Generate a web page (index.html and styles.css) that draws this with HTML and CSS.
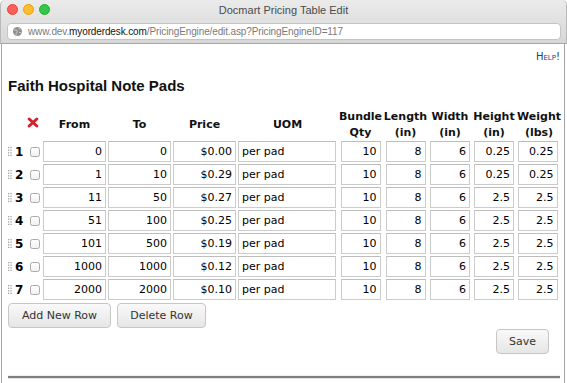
FILE: index.html
```html
<!DOCTYPE html>
<html>
<head>
<meta charset="utf-8">
<title>Docmart Pricing Table Edit</title>
<link rel="stylesheet" href="styles.css">
</head>
<body>
<div class="window">
  <div class="chrome">
    <div class="titlebar">
      <div class="lights">
        <span class="light red"></span><span class="light yellow"></span><span class="light green"></span>
      </div>
      <div class="wintitle">Docmart Pricing Table Edit</div>
      <div></div>
    </div>
    <div class="addr">
      <svg class="globe" width="9" height="9" viewBox="0 0 9 9">
        <circle cx="4.5" cy="4.5" r="4.5" fill="#8f8f8f"/>
        <path d="M1.2 3.2 Q3 2.2 4 3.6 Q5 5 3.6 5.8 Q2.6 6.6 3.2 8.4 M5.6 0.7 Q6.2 2 7.4 2.2 M6 5.6 Q7 5 8.2 6" stroke="#d8d8d8" stroke-width="0.9" fill="none"/>
      </svg>
      <span class="url"><span class="dim">www.dev.</span>myorderdesk.com<span class="dim">/PricingEngine/edit.asp?PricingEngineID=117</span></span>
    </div>
  </div>

  <div class="page">
    <div class="helprow"><a class="help" href="#">Help!</a></div>
    <h1 class="title">Faith Hospital Note Pads</h1>

    <div class="grid head">
      <div class="hc"></div>
      <div class="hc xcell">
        <svg width="12" height="11" viewBox="0 0 12 11"><path d="M2.2 2 L9.8 9 M9.8 2 L2.2 9" stroke="#d61f2c" stroke-width="3" stroke-linecap="round"/></svg>
      </div>
      <div class="hc">From</div>
      <div class="hc">To</div>
      <div class="hc">Price</div>
      <div class="hc">UOM</div>
      <div class="hc"><span>Bundle</span><span>Qty</span></div>
      <div class="hc"><span>Length</span><span>(in)</span></div>
      <div class="hc"><span>Width</span><span>(in)</span></div>
      <div class="hc"><span>Height</span><span>(in)</span></div>
      <div class="hc wt"><span>Weight</span><span>(lbs)</span></div>
    </div>

    <div class="grid rows">
      <div class="lbl"><svg class="handle" width="4" height="9" viewBox="0 0 4 9"><g fill="#a3a3a3"><rect x="0" y="0" width="1.3" height="1.3"/><rect x="2.4" y="0" width="1.3" height="1.3"/><rect x="0" y="2.6" width="1.3" height="1.3"/><rect x="2.4" y="2.6" width="1.3" height="1.3"/><rect x="0" y="5.2" width="1.3" height="1.3"/><rect x="2.4" y="5.2" width="1.3" height="1.3"/><rect x="0" y="7.7" width="1.3" height="1.3"/><rect x="2.4" y="7.7" width="1.3" height="1.3"/></g></svg><b>1</b></div>
      <div class="cbc"><input type="checkbox" class="cb"></div>
      <div class="c"><input class="in w63" value="0"></div>
      <div class="c"><input class="in w63" value="0"></div>
      <div class="c"><input class="in w63" value="$0.00"></div>
      <div class="c"><input class="in uom" value="per pad"></div>
      <div class="c"><input class="in w40" value="10"></div>
      <div class="c"><input class="in w40" value="8"></div>
      <div class="c"><input class="in w40" value="6"></div>
      <div class="c"><input class="in w40" value="0.25"></div>
      <div class="c"><input class="in w40" value="0.25"></div>

      <div class="lbl"><svg class="handle" width="4" height="9" viewBox="0 0 4 9"><g fill="#a3a3a3"><rect x="0" y="0" width="1.3" height="1.3"/><rect x="2.4" y="0" width="1.3" height="1.3"/><rect x="0" y="2.6" width="1.3" height="1.3"/><rect x="2.4" y="2.6" width="1.3" height="1.3"/><rect x="0" y="5.2" width="1.3" height="1.3"/><rect x="2.4" y="5.2" width="1.3" height="1.3"/><rect x="0" y="7.7" width="1.3" height="1.3"/><rect x="2.4" y="7.7" width="1.3" height="1.3"/></g></svg><b>2</b></div>
      <div class="cbc"><input type="checkbox" class="cb"></div>
      <div class="c"><input class="in w63" value="1"></div>
      <div class="c"><input class="in w63" value="10"></div>
      <div class="c"><input class="in w63" value="$0.29"></div>
      <div class="c"><input class="in uom" value="per pad"></div>
      <div class="c"><input class="in w40" value="10"></div>
      <div class="c"><input class="in w40" value="8"></div>
      <div class="c"><input class="in w40" value="6"></div>
      <div class="c"><input class="in w40" value="0.25"></div>
      <div class="c"><input class="in w40" value="0.25"></div>

      <div class="lbl"><svg class="handle" width="4" height="9" viewBox="0 0 4 9"><g fill="#a3a3a3"><rect x="0" y="0" width="1.3" height="1.3"/><rect x="2.4" y="0" width="1.3" height="1.3"/><rect x="0" y="2.6" width="1.3" height="1.3"/><rect x="2.4" y="2.6" width="1.3" height="1.3"/><rect x="0" y="5.2" width="1.3" height="1.3"/><rect x="2.4" y="5.2" width="1.3" height="1.3"/><rect x="0" y="7.7" width="1.3" height="1.3"/><rect x="2.4" y="7.7" width="1.3" height="1.3"/></g></svg><b>3</b></div>
      <div class="cbc"><input type="checkbox" class="cb"></div>
      <div class="c"><input class="in w63" value="11"></div>
      <div class="c"><input class="in w63" value="50"></div>
      <div class="c"><input class="in w63" value="$0.27"></div>
      <div class="c"><input class="in uom" value="per pad"></div>
      <div class="c"><input class="in w40" value="10"></div>
      <div class="c"><input class="in w40" value="8"></div>
      <div class="c"><input class="in w40" value="6"></div>
      <div class="c"><input class="in w40" value="2.5"></div>
      <div class="c"><input class="in w40" value="2.5"></div>

      <div class="lbl"><svg class="handle" width="4" height="9" viewBox="0 0 4 9"><g fill="#a3a3a3"><rect x="0" y="0" width="1.3" height="1.3"/><rect x="2.4" y="0" width="1.3" height="1.3"/><rect x="0" y="2.6" width="1.3" height="1.3"/><rect x="2.4" y="2.6" width="1.3" height="1.3"/><rect x="0" y="5.2" width="1.3" height="1.3"/><rect x="2.4" y="5.2" width="1.3" height="1.3"/><rect x="0" y="7.7" width="1.3" height="1.3"/><rect x="2.4" y="7.7" width="1.3" height="1.3"/></g></svg><b>4</b></div>
      <div class="cbc"><input type="checkbox" class="cb"></div>
      <div class="c"><input class="in w63" value="51"></div>
      <div class="c"><input class="in w63" value="100"></div>
      <div class="c"><input class="in w63" value="$0.25"></div>
      <div class="c"><input class="in uom" value="per pad"></div>
      <div class="c"><input class="in w40" value="10"></div>
      <div class="c"><input class="in w40" value="8"></div>
      <div class="c"><input class="in w40" value="6"></div>
      <div class="c"><input class="in w40" value="2.5"></div>
      <div class="c"><input class="in w40" value="2.5"></div>

      <div class="lbl"><svg class="handle" width="4" height="9" viewBox="0 0 4 9"><g fill="#a3a3a3"><rect x="0" y="0" width="1.3" height="1.3"/><rect x="2.4" y="0" width="1.3" height="1.3"/><rect x="0" y="2.6" width="1.3" height="1.3"/><rect x="2.4" y="2.6" width="1.3" height="1.3"/><rect x="0" y="5.2" width="1.3" height="1.3"/><rect x="2.4" y="5.2" width="1.3" height="1.3"/><rect x="0" y="7.7" width="1.3" height="1.3"/><rect x="2.4" y="7.7" width="1.3" height="1.3"/></g></svg><b>5</b></div>
      <div class="cbc"><input type="checkbox" class="cb"></div>
      <div class="c"><input class="in w63" value="101"></div>
      <div class="c"><input class="in w63" value="500"></div>
      <div class="c"><input class="in w63" value="$0.19"></div>
      <div class="c"><input class="in uom" value="per pad"></div>
      <div class="c"><input class="in w40" value="10"></div>
      <div class="c"><input class="in w40" value="8"></div>
      <div class="c"><input class="in w40" value="6"></div>
      <div class="c"><input class="in w40" value="2.5"></div>
      <div class="c"><input class="in w40" value="2.5"></div>

      <div class="lbl"><svg class="handle" width="4" height="9" viewBox="0 0 4 9"><g fill="#a3a3a3"><rect x="0" y="0" width="1.3" height="1.3"/><rect x="2.4" y="0" width="1.3" height="1.3"/><rect x="0" y="2.6" width="1.3" height="1.3"/><rect x="2.4" y="2.6" width="1.3" height="1.3"/><rect x="0" y="5.2" width="1.3" height="1.3"/><rect x="2.4" y="5.2" width="1.3" height="1.3"/><rect x="0" y="7.7" width="1.3" height="1.3"/><rect x="2.4" y="7.7" width="1.3" height="1.3"/></g></svg><b>6</b></div>
      <div class="cbc"><input type="checkbox" class="cb"></div>
      <div class="c"><input class="in w63" value="1000"></div>
      <div class="c"><input class="in w63" value="1000"></div>
      <div class="c"><input class="in w63" value="$0.12"></div>
      <div class="c"><input class="in uom" value="per pad"></div>
      <div class="c"><input class="in w40" value="10"></div>
      <div class="c"><input class="in w40" value="8"></div>
      <div class="c"><input class="in w40" value="6"></div>
      <div class="c"><input class="in w40" value="2.5"></div>
      <div class="c"><input class="in w40" value="2.5"></div>

      <div class="lbl"><svg class="handle" width="4" height="9" viewBox="0 0 4 9"><g fill="#a3a3a3"><rect x="0" y="0" width="1.3" height="1.3"/><rect x="2.4" y="0" width="1.3" height="1.3"/><rect x="0" y="2.6" width="1.3" height="1.3"/><rect x="2.4" y="2.6" width="1.3" height="1.3"/><rect x="0" y="5.2" width="1.3" height="1.3"/><rect x="2.4" y="5.2" width="1.3" height="1.3"/><rect x="0" y="7.7" width="1.3" height="1.3"/><rect x="2.4" y="7.7" width="1.3" height="1.3"/></g></svg><b>7</b></div>
      <div class="cbc"><input type="checkbox" class="cb"></div>
      <div class="c"><input class="in w63" value="2000"></div>
      <div class="c"><input class="in w63" value="2000"></div>
      <div class="c"><input class="in w63" value="$0.10"></div>
      <div class="c"><input class="in uom" value="per pad"></div>
      <div class="c"><input class="in w40" value="10"></div>
      <div class="c"><input class="in w40" value="8"></div>
      <div class="c"><input class="in w40" value="6"></div>
      <div class="c"><input class="in w40" value="2.5"></div>
      <div class="c"><input class="in w40" value="2.5"></div>
    </div>

    <div class="actions">
      <button class="btn add">Add New Row</button>
      <button class="btn del">Delete Row</button>
    </div>
    <div class="saverow">
      <button class="btn save">Save</button>
    </div>
    <div class="rule"></div>
  </div>
</div>
</body>
</html>
```

FILE: styles.css
```css
* { box-sizing: border-box; }
html, body { margin: 0; padding: 0; background: #fff; }
body {
  width: 567px;
  height: 383px;
  overflow: hidden;
  font-family: "DejaVu Sans", Verdana, sans-serif;
  color: #000;
}
.window {
  width: 567px;
  height: 383px;
  display: flex;
  flex-direction: column;
}

/* browser chrome */
.chrome {
  height: 44px;
  flex: none;
  background: linear-gradient(#ebebeb, #d6d6d6);
  border-bottom: 1px solid #a7a7a7;
  border-radius: 5px 5px 0 0;
  border-left: 1px solid #b9b9b9;
  border-right: 1px solid #b9b9b9;
}
.titlebar {
  height: 19px;
  display: grid;
  grid-template-columns: 1fr auto 1fr;
  align-items: center;
}
.lights {
  display: flex;
  gap: 5px;
  padding-left: 6px;
  margin-top: -1px;
}
.light {
  width: 11px;
  height: 11px;
  border-radius: 50%;
}
.red { background: #fc5f57; border: 1px solid #e2463f; }
.yellow { background: #fdbc2e; border: 1px solid #e1a116; }
.green { background: #33c748; border: 1px solid #27aa35; }
.wintitle {
  font-family: "Liberation Sans", Arial, sans-serif;
  font-size: 11px;
  color: #4b4b4b;
  white-space: nowrap;
}
.addr {
  margin: 4px 5px 0 6px;
  height: 17px;
  background: #fff;
  border: 1px solid #c4c4c4;
  border-radius: 4px;
  display: flex;
  align-items: center;
  padding-left: 5px;
}
.globe { flex: none; }
.url {
  margin-left: 6px;
  font-family: "Liberation Sans", Arial, sans-serif;
  font-size: 10px;
  letter-spacing: -0.12px;
  color: #111;
  white-space: nowrap;
}
.dim { color: #7a7a7a; }

/* page */
.page {
  flex: 1;
  margin: 0 2px 0 1px;
  border-left: 1px solid #a5a5a5;
  border-right: 1px solid #a5a5a5;
  padding: 7px 4px 0 6px;
}
.helprow {
  display: flex;
  justify-content: flex-end;
  height: 12px;
  line-height: 12px;
}
.help {
  font-size: 10px;
  font-variant: small-caps;
  color: #1f3e7c;
  text-decoration: none;
}
.title {
  margin: 14px 0 0 0;
  font-family: "Liberation Sans", Arial, sans-serif;
  font-size: 15px;
  line-height: 18px;
  font-weight: bold;
  color: #111;
}

/* table grid */
.grid {
  display: grid;
  grid-template-columns: 18px 16px 65px 65px 65px 101px 45px 45px 44px 44px 43px;
}
.head {
  margin-top: 14px;
  height: 32px;
  align-items: center;
}
.hc {
  display: flex;
  flex-direction: column;
  align-items: center;
  justify-content: center;
  font-size: 11px;
  font-weight: bold;
  line-height: 16px;
  white-space: nowrap;
  color: #111;
}
.wt { padding-left: 3px; }
.xcell { margin-left: -3px; margin-top: -5px; }
.xcell svg { display: block; }

.rows {
  grid-auto-rows: 21px;
  row-gap: 2px;
}
.lbl {
  display: flex;
  align-items: center;
  gap: 3px;
  font-size: 12px;
  font-weight: bold;
}
.lbl b { line-height: 12px; margin-top: 1px; }
.handle { display: block; flex: none; }
.cbc {
  display: flex;
  align-items: center;
  justify-content: center;
  padding-left: 1px;
}
.cb {
  appearance: none;
  -webkit-appearance: none;
  margin: 1px 0 0 0;
  width: 10px;
  height: 10px;
  border: 1px solid #a9a9a9;
  border-radius: 2.5px;
  background: linear-gradient(#ffffff, #f1f1f1);
}
.c {
  display: flex;
  justify-content: center;
}
.in {
  height: 21px;
  margin: 0;
  border: 1px solid #cbcbcb;
  border-top-color: #bdbdbd;
  border-radius: 0;
  padding: 0 3px;
  font-family: "DejaVu Sans", Verdana, sans-serif;
  font-size: 11px;
  color: #000;
  background: #fff;
  text-align: right;
  outline: none;
}
.w63 { width: 63px; }
.w40 { width: 40px; }
.uom { width: 98px; text-align: left; margin-left: -1px; }

/* buttons */
.actions {
  margin-top: 3px;
  display: flex;
  gap: 6px;
}
.btn {
  height: 25px;
  margin: 0;
  padding: 0;
  font-family: "DejaVu Sans", Verdana, sans-serif;
  font-size: 11px;
  color: #333;
  background: linear-gradient(#f9f9f9, #e6e6e6);
  border: 1px solid #c6c6c6;
  border-radius: 4px;
}
.add { width: 103px; }
.del { width: 89px; }
.saverow {
  margin-top: 1px;
  display: flex;
  justify-content: flex-end;
  padding-right: 11px;
}
.save { width: 53px; }
.rule {
  margin-top: 22px;
  height: 2px;
  background: #7e7e7e;
  box-shadow: 0 1px 0 #e6e6e6, 0 -1px 0 #efefef;
}
```
